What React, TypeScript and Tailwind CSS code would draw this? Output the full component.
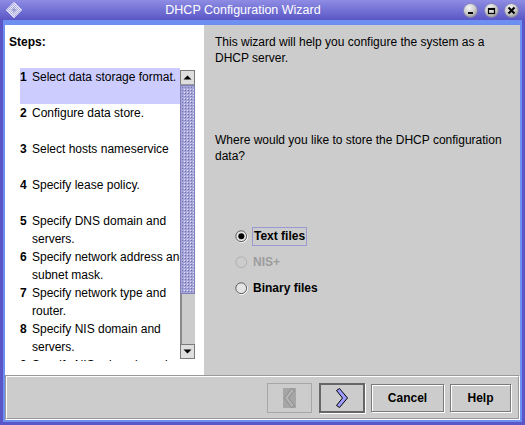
import React from "react";

type Step = { n: string; lines: string[] };

const steps: Step[] = [
  { n: "1", lines: ["Select data storage format."] },
  { n: "2", lines: ["Configure data store."] },
  { n: "3", lines: ["Select hosts nameservice"] },
  { n: "4", lines: ["Specify lease policy."] },
  { n: "5", lines: ["Specify DNS domain and", "servers."] },
  { n: "6", lines: ["Specify network address and", "subnet mask."] },
  { n: "7", lines: ["Specify network type and", "router."] },
  { n: "8", lines: ["Specify NIS domain and", "servers."] },
  { n: "9", lines: ["Specify NIS+ domain and", "servers."] },
  { n: "10", lines: ["Review."] },
];

/* ---------- title bar bits ---------- */

function WindowIcon() {
  return (
    <svg width="18" height="18" viewBox="0 0 18 18">
      <defs>
        <pattern id="chk" width="2" height="2" patternUnits="userSpaceOnUse">
          <rect width="2" height="2" fill="#e8e8f8" />
          <rect width="1" height="1" fill="#a9a9dc" />
          <rect x="1" y="1" width="1" height="1" fill="#b8b8e4" />
        </pattern>
      </defs>
      <polygon points="9,1 17,9 9,17 1,9" fill="url(#chk)" stroke="#c4c4ec" strokeWidth="1" />
      <path d="M6.5 9h5M9 6.5v5" stroke="#8c8cc8" strokeWidth="1" />
    </svg>
  );
}

function RoundButton({ kind }: { kind: "min" | "max" | "close" }) {
  return (
    <svg width="15" height="15" viewBox="0 0 15 15">
      <defs>
        <radialGradient id={"rb-" + kind} cx="40%" cy="30%" r="75%">
          <stop offset="0%" stopColor="#f6f6f6" />
          <stop offset="60%" stopColor="#c8c8c8" />
          <stop offset="100%" stopColor="#8e8e8e" />
        </radialGradient>
      </defs>
      <circle cx="7.5" cy="7.5" r="7" fill={"url(#rb-" + kind + ")"} stroke="#7d7bb8" strokeWidth="0.8" />
      {kind === "min" && <rect x="5" y="9" width="5" height="2" fill="#000" />}
      {kind === "max" && (
        <>
          <rect x="4.5" y="5.5" width="6" height="5" fill="none" stroke="#000" strokeWidth="1.2" />
          <rect x="4" y="5" width="7" height="2" fill="#000" />
        </>
      )}
      {kind === "close" && (
        <path d="M4.5 4.5l6 6M10.5 4.5l-6 6" stroke="#000" strokeWidth="2.2" />
      )}
    </svg>
  );
}

function TitleBar() {
  return (
    <div className="h-[20px] flex items-center bg-gradient-to-b from-[#8e8ce3] to-[#5b57c6]">
      <div className="ml-[5px] w-[18px] h-[18px]">
        <WindowIcon />
      </div>
      <div className="flex-1 text-center text-white text-[12.5px] leading-[20px]">
        DHCP Configuration Wizard
      </div>
      <div className="flex items-center gap-[5px] mr-[6px]">
        <RoundButton kind="min" />
        <div className="ml-[1px]">
          <RoundButton kind="max" />
        </div>
        <RoundButton kind="close" />
      </div>
    </div>
  );
}

/* ---------- steps list ---------- */

function Arrow({ up }: { up?: boolean }) {
  return (
    <svg width="9" height="5" viewBox="0 0 9 5">
      {up ? <polygon points="0.5,4.5 4.5,0.5 8.5,4.5" fill="#000" /> : <polygon points="0.5,0.5 8.5,0.5 4.5,4.5" fill="#000" />}
    </svg>
  );
}

function ScrollBar() {
  return (
    <div className="w-[15px] h-[289px] mt-[2px] flex flex-col shrink-0">
      <div className="h-[15px] flex items-center justify-center bg-[#dedede] border border-[#7a7a7a] border-b-[#999]">
        <Arrow up />
      </div>
      <div className="h-[209px] border border-[#8080b8] bg-[#a6a6da]">
        <svg width="100%" height="100%">
          <defs>
            <pattern id="bumps" width="3" height="3" patternUnits="userSpaceOnUse">
              <rect width="3" height="3" fill="#a6a6da" />
              <rect x="0" y="0" width="1" height="1" fill="#e0e0f8" />
              <rect x="1" y="1" width="1" height="1" fill="#7070a8" />
            </pattern>
          </defs>
          <rect x="1" y="1" width="100%" height="100%" fill="url(#bumps)" />
        </svg>
      </div>
      <div className="flex-1 bg-[#cccccc] border-l-2 border-[#8a8a8a]" />
      <div className="h-[15px] flex items-center justify-center bg-[#dedede] border border-[#7a7a7a]">
        <Arrow />
      </div>
    </div>
  );
}

function StepsPanel() {
  return (
    <div className="w-[199px] bg-white pt-[9px] pl-[4px] flex flex-col">
      <div className="font-bold leading-[16px]">Steps:</div>
      <div className="mt-[18px] ml-[11px] w-[175px] h-[293px] flex">
        <div className="w-[160px] h-[293px] overflow-hidden">
          {steps.map((s, i) => (
            <div
              key={s.n}
              className={`h-[36px] flex leading-[18px] whitespace-nowrap ${i === 0 ? "bg-[#ccccff]" : ""}`}
            >
              <div className="w-[12px] shrink-0 font-bold">{s.n}</div>
              <div>
                {s.lines.map((l) => (
                  <div key={l}>{l}</div>
                ))}
              </div>
            </div>
          ))}
        </div>
        <ScrollBar />
      </div>
    </div>
  );
}

/* ---------- main panel ---------- */

function Radio({ checked, disabled }: { checked?: boolean; disabled?: boolean }) {
  const edge = disabled ? "#b0b0b0" : "#5a5a5a";
  return (
    <svg width="13" height="13" viewBox="0 0 13 13">
      {!disabled && <circle cx="6.8" cy="6.8" r="5.6" fill="none" stroke="#ffffff" strokeWidth="1" />}
      <circle cx="6.2" cy="6.2" r="5.4" fill={disabled ? "#cccccc" : "#e4e4e4"} stroke={edge} strokeWidth="1" />
      {checked && <circle cx="6.3" cy="6.3" r="3" fill="#000" />}
    </svg>
  );
}

function MainPanel() {
  return (
    <div className="flex-1 bg-[#cccccc] pl-[11px] pt-[9px] leading-[16px]">
      <p>
        This wizard will help you configure the system as a
        <br />
        DHCP server.
      </p>
      <p className="mt-[66px]">
        Where would you like to store the DHCP configuration
        <br />
        data?
      </p>
      <div className="mt-[59px] ml-[20px] flex flex-col">
        <div className="h-[26px] flex items-center">
          <Radio checked />
          <span className="ml-[4px] font-bold border border-[#9a9ad0] px-[1px] leading-[17px]">Text files</span>
        </div>
        <div className="h-[26px] flex items-center">
          <Radio disabled />
          <span className="ml-[5px] font-bold text-[#9c9c9c]">NIS+</span>
        </div>
        <div className="h-[26px] flex items-center">
          <Radio />
          <span className="ml-[5px] font-bold">Binary files</span>
        </div>
      </div>
    </div>
  );
}

/* ---------- bottom buttons ---------- */

function Chevron({ back }: { back?: boolean }) {
  if (back) {
    return (
      <div className="w-[13px] h-[20px] bg-[#a6a6a6]">
        <svg width="13" height="20" viewBox="0 0 13 20">
          <polygon points="11.5,2 8.5,0.5 1.5,10 8.5,19.5 11.5,18 5.5,10" fill="#b4b4b4" stroke="#8c8c8c" strokeWidth="1" />
        </svg>
      </div>
    );
  }
  return (
    <svg width="14" height="20" viewBox="0 0 14 20">
      <polygon points="1.5,2.5 4.5,0.5 12.5,10 4.5,19.5 1.5,17.5 7.5,10" fill="#9a9aff" stroke="#000" strokeWidth="1" />
    </svg>
  );
}

function ButtonBar() {
  return (
    <div className="h-[45px] border border-[#999] border-r-white border-b-white">
      <div className="h-full border border-white border-r-[#999] border-b-[#999] flex items-center justify-end pr-[7px]">
        <div className="w-[45px] h-[30px] border border-[#a6a6a6] flex items-center justify-center">
          <Chevron back />
        </div>
        <div className="ml-[7px] w-[46px] h-[30px] border-2 border-[#666] shadow-[1px_1px_0_#fff] flex items-center justify-center">
          <Chevron />
        </div>
        <div className="ml-[6px] w-[73px] h-[28px] border border-[#7a7a7a] shadow-[1px_1px_0_#fff,inset_1px_1px_0_#fff] flex items-center justify-center font-bold">
          Cancel
        </div>
        <div className="ml-[6px] w-[61px] h-[28px] border border-[#7a7a7a] shadow-[1px_1px_0_#fff,inset_1px_1px_0_#fff] flex items-center justify-center font-bold">
          Help
        </div>
      </div>
    </div>
  );
}

export default function App() {
  return (
    <div className="w-[525px] h-[425px] flex flex-col bg-[#5a56c8] font-['Liberation_Sans',Arial,sans-serif] text-[12px] text-black overflow-hidden">
      <TitleBar />
      <div className="flex-1 mx-[3px] mb-[3px] border-x-2 border-b-2 border-t-[5px] border-[#6d8ff2] flex flex-col bg-[#cccccc]">
        <div className="h-[350px] flex">
          <StepsPanel />
          <MainPanel />
        </div>
        <ButtonBar />
      </div>
    </div>
  );
}
